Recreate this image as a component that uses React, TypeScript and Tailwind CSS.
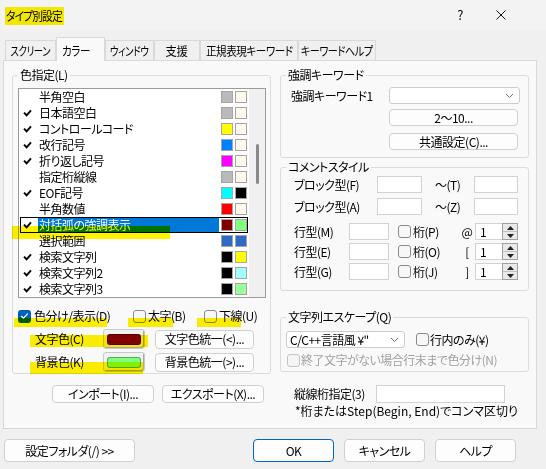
import React from "react";

type Item = { label: string; checked: boolean; fg: string; bg: string };

const items: Item[] = [
  { label: "半角空白", checked: false, fg: "bg-[#bababa]", bg: "bg-[#fff8ec]" },
  { label: "日本語空白", checked: true, fg: "bg-[#bababa]", bg: "bg-[#fff8ec]" },
  { label: "コントロールコード", checked: true, fg: "bg-[#ffff00]", bg: "bg-[#fff8ec]" },
  { label: "改行記号", checked: true, fg: "bg-[#0080ff]", bg: "bg-[#fff8ec]" },
  { label: "折り返し記号", checked: true, fg: "bg-[#ff00ff]", bg: "bg-[#fff8ec]" },
  { label: "指定桁縦線", checked: false, fg: "bg-[#bababa]", bg: "bg-[#fff8ec]" },
  { label: "EOF記号", checked: true, fg: "bg-[#00ffff]", bg: "bg-[#000000]" },
  { label: "半角数値", checked: false, fg: "bg-[#ff0000]", bg: "bg-[#fff8ec]" },
  { label: "対括弧の強調表示", checked: true, fg: "bg-[#800000]", bg: "bg-[#80ff80]" },
  { label: "選択範囲", checked: false, fg: "bg-[#316ac5]", bg: "bg-[#316ac5]" },
  { label: "検索文字列", checked: true, fg: "bg-[#000000]", bg: "bg-[#ffff00]" },
  { label: "検索文字列2", checked: true, fg: "bg-[#000000]", bg: "bg-[#a0ffff]" },
  { label: "検索文字列3", checked: true, fg: "bg-[#000000]", bg: "bg-[#99ff99]" },
];

const SEL = 8;

function Check() {
  return (
    <svg width="9" height="8" viewBox="0 0 9 8">
      <path d="M1 3.6 L3.6 6.4 L8 1.4" fill="none" stroke="#000" strokeWidth="1.9" />
    </svg>
  );
}

function CheckBox({ checked, disabled }: { checked?: boolean; disabled?: boolean }) {
  if (checked) {
    return (
      <div className="w-[13px] h-[13px] rounded-[3px] bg-[#005fb8] flex items-center justify-center shrink-0">
        <svg width="9" height="8" viewBox="0 0 9 8">
          <path d="M1.2 4 L3.5 6.2 L7.8 1.6" fill="none" stroke="#fff" strokeWidth="1.3" />
        </svg>
      </div>
    );
  }
  return (
    <div
      className={
        disabled
          ? "w-[13px] h-[13px] rounded-[3px] border border-[#c5c5c5] bg-[#f5f5f5] shrink-0"
          : "w-[13px] h-[13px] rounded-[3px] border border-[#8a8a8a] bg-[#f7f7f7] shrink-0"
      }
    />
  );
}

function Btn({ className, children }: { className: string; children: React.ReactNode }) {
  return (
    <div
      className={
        "flex items-center justify-center bg-[#fdfdfd] border border-[#d0d0d0] rounded-[4px] leading-none whitespace-nowrap " +
        className
      }
    >
      {children}
    </div>
  );
}

function Input({ className }: { className: string }) {
  return <div className={"bg-white border border-[#d2d2d2] " + className} />;
}

function Chevron() {
  return (
    <svg width="9" height="6" viewBox="0 0 9 6">
      <path d="M1 1 L4.5 4.5 L8 1" fill="none" stroke="#707070" strokeWidth="1" />
    </svg>
  );
}

function Spin() {
  return (
    <div className="w-[16px] h-[17px] bg-[#e9e9e9] border border-[#a0a0a0] flex flex-col">
      <div className="flex-1 flex items-center justify-center border-b border-[#c0c0c0]">
        <svg width="7" height="4" viewBox="0 0 7 4">
          <path d="M0 4 L3.5 0 L7 4 Z" fill="#222" />
        </svg>
      </div>
      <div className="flex-1 flex items-center justify-center">
        <svg width="7" height="4" viewBox="0 0 7 4">
          <path d="M0 0 L3.5 4 L7 0 Z" fill="#222" />
        </svg>
      </div>
    </div>
  );
}

function Group({
  label,
  className,
  children,
}: {
  label: string;
  className: string;
  children: React.ReactNode;
}) {
  return (
    <div className={"relative border border-[#dcdcdc] rounded-[3px] " + className}>
      <span className="absolute left-[5px] -top-[9px] px-[2px] bg-[#f9f9f9] leading-[16px] whitespace-nowrap">
        {label}
      </span>
      {children}
    </div>
  );
}

function ColorBtn({ swatch }: { swatch: string }) {
  return (
    <div className="w-[42px] h-[20px] bg-[#f1f1f1] border border-[#c9c9c9] rounded-[3px] shadow-[inset_-1px_-1px_0_#a8a8a8] flex items-center justify-center">
      <div className={"w-[34px] h-[11px] rounded-[3px] border border-[#00000055] " + swatch} />
    </div>
  );
}

function Tab({
  label,
  w,
  s,
  selected,
}: {
  label: string;
  w: string;
  s: string;
  selected?: boolean;
}) {
  return (
    <div
      className={
        selected
          ? "relative z-10 -mb-px h-[24px] bg-[#f9f9f9] border border-b-0 border-[#d9d9d9] flex items-center justify-start pl-[5px] pt-[2px] whitespace-nowrap " + w
          : "h-[20px] bg-[#f0f0f0] border border-b-0 border-[#d9d9d9] flex items-center justify-center whitespace-nowrap " + w
      }
    >
      <span className={"inline-block " + s}>{label}</span>
    </div>
  );
}

export default function App() {
  return (
    <div className="relative isolate w-[546px] h-[469px] bg-[#f0f0f0] text-[12px] text-black overflow-hidden font-['Noto_Sans_CJK_JP',sans-serif] [font-feature-settings:'palt'] leading-[16px] tracking-[-0.5px]">
      {/* title bar */}
      <div className="h-[30px] flex items-center bg-[#f3f3f3]">
        <span className="ml-[6px] mt-px tracking-[-1px] inline-block origin-left scale-x-[0.9]">タイプ別設定</span>
        <span className="ml-auto text-[13px]">?</span>
        <svg className="ml-[33px] mr-[40px]" width="10" height="10" viewBox="0 0 10 10">
          <path d="M0.5 0.5 L9.5 9.5 M9.5 0.5 L0.5 9.5" stroke="#111" strokeWidth="1" />
        </svg>
      </div>

      {/* tabs */}
      <div className="h-[30px] flex items-end pl-[5px]">
        <Tab label="スクリーン" w="w-[51px]" s="scale-x-[0.78]" />
        <Tab label="カラー" w="w-[49px]" s="origin-left scale-x-[0.88]" selected />
        <Tab label="ウィンドウ" w="w-[49px]" s="scale-x-[0.8]" />
        <Tab label="支援" w="w-[46px]" s="scale-x-[0.95]" />
        <Tab label="正規表現キーワード" w="w-[98px]" s="scale-x-[0.88]" />
        <Tab label="キーワードヘルプ" w="w-[78px]" s="scale-x-[0.84]" />
      </div>

      {/* panel */}
      <div className="ml-[3px] w-[534px] h-[369px] bg-[#f9f9f9] border border-[#d9d9d9] flex pl-[8px] pt-[14px]">
        {/* left column */}
        <div className="w-[259px] flex flex-col">
          <Group label="色指定(L)" className="h-[299px] pt-[12px] pl-[5px]">
            <div className="w-[248px] h-[210px] border border-[#9c9c9c] bg-white flex">
              <div className="w-[230px] flex flex-col">
                {items.map((it, i) => (
                  <div key={it.label} className="relative h-[16px] flex items-center">
                    <div className="w-[19px] flex justify-end pr-[6px]">{it.checked && <Check />}</div>
                    <div
                      className={
                        i === SEL
                          ? "w-[181px] h-[14px] pl-px leading-[14px] bg-[#0078d7] text-white whitespace-nowrap"
                          : "w-[181px] h-[14px] pl-px leading-[14px] whitespace-nowrap"
                      }
                    >
                      {it.label}
                    </div>
                    <div className={"ml-[2px] w-[12px] h-[12px] border border-[#a5a5a5] " + it.fg} />
                    <div className={"ml-[2px] w-[12px] h-[12px] border border-[#a5a5a5] " + it.bg} />
                    {i === SEL && (
                      <div className="absolute top-0 bottom-0 left-[1px] right-[1px] border border-black" />
                    )}
                  </div>
                ))}
              </div>
              <div className="w-[16px] bg-[#f0f0f0] pt-[55px] flex justify-center">
                <div className="w-[3px] h-[40px] rounded-full bg-[#8a8a8a]" />
              </div>
            </div>

            <div className="mt-[10px] h-[16px] flex items-center">
              <div className="w-[115px] flex items-center">
                <CheckBox checked />
                <span className="ml-[3px] whitespace-nowrap">色分け/表示(D)</span>
              </div>
              <div className="w-[71px] flex items-center">
                <CheckBox />
                <span className="ml-[2px] whitespace-nowrap">太字(B)</span>
              </div>
              <div className="flex items-center">
                <CheckBox />
                <span className="ml-[2px] whitespace-nowrap">下線(U)</span>
              </div>
            </div>

            <div className="mt-[5px] h-[20px] flex items-center pl-[17px]">
              <span className="w-[68px]">文字色(C)</span>
              <ColorBtn swatch="bg-[#800000]" />
              <Btn className="ml-[10px] w-[99px] h-[19px]">文字色統一(&lt;)...</Btn>
            </div>
            <div className="mt-[3px] h-[20px] flex items-center pl-[17px]">
              <span className="w-[68px]">背景色(K)</span>
              <ColorBtn swatch="bg-[#80ff80]" />
              <Btn className="ml-[10px] w-[99px] h-[19px]">背景色統一(&gt;)...</Btn>
            </div>
          </Group>

          <div className="mt-[11px] pl-[40px] flex gap-[8px]">
            <Btn className="w-[102px] h-[18px]">インポート(I)...</Btn>
            <Btn className="w-[102px] h-[18px]">エクスポート(X)...</Btn>
          </div>
        </div>

        {/* right column */}
        <div className="ml-[9px] w-[249px] flex flex-col">
          <Group label="強調キーワード" className="h-[83px] pt-[11px] pl-[10px]">
            <div className="h-[17px] flex items-center">
              <span className="w-[98px] whitespace-nowrap">強調キーワード1</span>
              <div className="w-[131px] h-[17px] bg-white border border-[#cdcdcd] rounded-[3px] flex items-center justify-end pr-[5px]">
                <Chevron />
              </div>
            </div>
            <Btn className="mt-[5px] ml-[98px] w-[129px] h-[17px]">2〜10...</Btn>
            <Btn className="mt-[7px] ml-[98px] w-[129px] h-[17px]">共通設定(C)...</Btn>
          </Group>

          <Group label="コメントスタイル" className="mt-[9px] h-[124px] pt-[8px] pl-[13px]">
            <div className="h-[17px] flex items-center">
              <span className="w-[83px] whitespace-nowrap">ブロック型(F)</span>
              <Input className="w-[45px] h-[17px]" />
              <span className="ml-[13px] w-[39px]">〜(T)</span>
              <Input className="w-[44px] h-[17px]" />
            </div>
            <div className="mt-[5px] h-[17px] flex items-center">
              <span className="w-[83px] whitespace-nowrap">ブロック型(A)</span>
              <Input className="w-[45px] h-[17px]" />
              <span className="ml-[13px] w-[39px]">〜(Z)</span>
              <Input className="w-[44px] h-[17px]" />
            </div>
            {[
              ["行型(M)", "桁(P)", "@", "mt-[8px]"],
              ["行型(E)", "桁(O)", "[", "mt-[3px]"],
              ["行型(G)", "桁(J)", "]", "mt-[3px]"],
            ].map(([a, b, c, mt]) => (
              <div key={a} className={"h-[17px] flex items-center " + mt}>
                <span className="w-[55px] whitespace-nowrap">{a}</span>
                <Input className="w-[40px] h-[17px]" />
                <div className="ml-[9px]">
                  <CheckBox />
                </div>
                <span className="w-[50px] pl-[2px]">{b}</span>
                <span className="w-[12px] text-center">{c}</span>
                <div className="ml-[2px] w-[27px] h-[17px] bg-white border border-[#d2d2d2] border-r-0 pl-[4px] leading-[15px]">
                  1
                </div>
                <Spin />
              </div>
            ))}
          </Group>

          <Group label="文字列エスケープ(Q)" className="mt-[26px] h-[55px] pt-[13px] pl-[5px]">
            <div className="h-[17px] flex items-center">
              <div className="w-[119px] h-[17px] bg-white border border-[#cdcdcd] rounded-[3px] flex items-center pl-[3px] pr-[5px]">
                <span className="whitespace-nowrap">C/C++言語風 ¥"</span>
                <span className="ml-auto">
                  <Chevron />
                </span>
              </div>
              <div className="ml-[11px]">
                <CheckBox />
              </div>
              <span className="ml-[1px] whitespace-nowrap">行内のみ(¥)</span>
            </div>
            <div className="mt-[5px] h-[14px] flex items-center pl-px">
              <CheckBox disabled />
              <span className="ml-[1px] text-[#a0a0a0] whitespace-nowrap">終了文字がない場合行末まで色分け(N)</span>
            </div>
          </Group>

          <div className="mt-[13px] h-[18px] flex items-center pl-[14px]">
            <span className="w-[82px] whitespace-nowrap">縦線桁指定(3)</span>
            <Input className="w-[129px] h-[18px]" />
          </div>
          <div className="mt-px pl-[15px] leading-[14px] whitespace-nowrap tracking-normal">
            *桁またはStep(Begin, End)でコンマ区切り
          </div>
        </div>
      </div>

      {/* bottom buttons */}
      <div className="mt-[10px] flex">
        <Btn className="ml-[4px] w-[131px] h-[23px]">設定フォルダ(/) &gt;&gt;</Btn>
        <div className="ml-[118px] w-[81px] h-[23px] bg-[#fdfdfd] border border-[#0067c0] rounded-[4px] flex items-center justify-center">
          OK
        </div>
        <Btn className="ml-[10px] w-[81px] h-[23px]">キャンセル</Btn>
        <Btn className="ml-[10px] w-[81px] h-[23px]">ヘルプ</Btn>
      </div>

      {/* highlighter marks */}
      <div className="pointer-events-none absolute left-[5px] top-[7px] w-[59px] h-[18px] bg-[#fff200] mix-blend-multiply" />
      <div className="pointer-events-none absolute left-[57px] top-[47px] w-[30px] h-[12px] bg-[#fff200] mix-blend-multiply" />
      <div className="pointer-events-none absolute left-[12px] top-[226px] w-[158px] h-[13px] bg-[#fff200] mix-blend-multiply" />
      <div className="pointer-events-none absolute left-[14px] top-[318px] w-[93px] h-[9px] bg-[#fff200] mix-blend-multiply" />
      <div className="pointer-events-none absolute left-[128px] top-[318px] w-[45px] h-[9px] bg-[#fff200] mix-blend-multiply" />
      <div className="pointer-events-none absolute left-[197px] top-[318px] w-[44px] h-[9px] bg-[#fff200] mix-blend-multiply" />
      <div className="pointer-events-none absolute left-[30px] top-[335px] w-[118px] h-[12px] bg-[#fff200] mix-blend-multiply" />
      <div className="pointer-events-none absolute left-[30px] top-[362px] w-[113px] h-[12px] bg-[#fff200] mix-blend-multiply" />
    </div>
  );
}
